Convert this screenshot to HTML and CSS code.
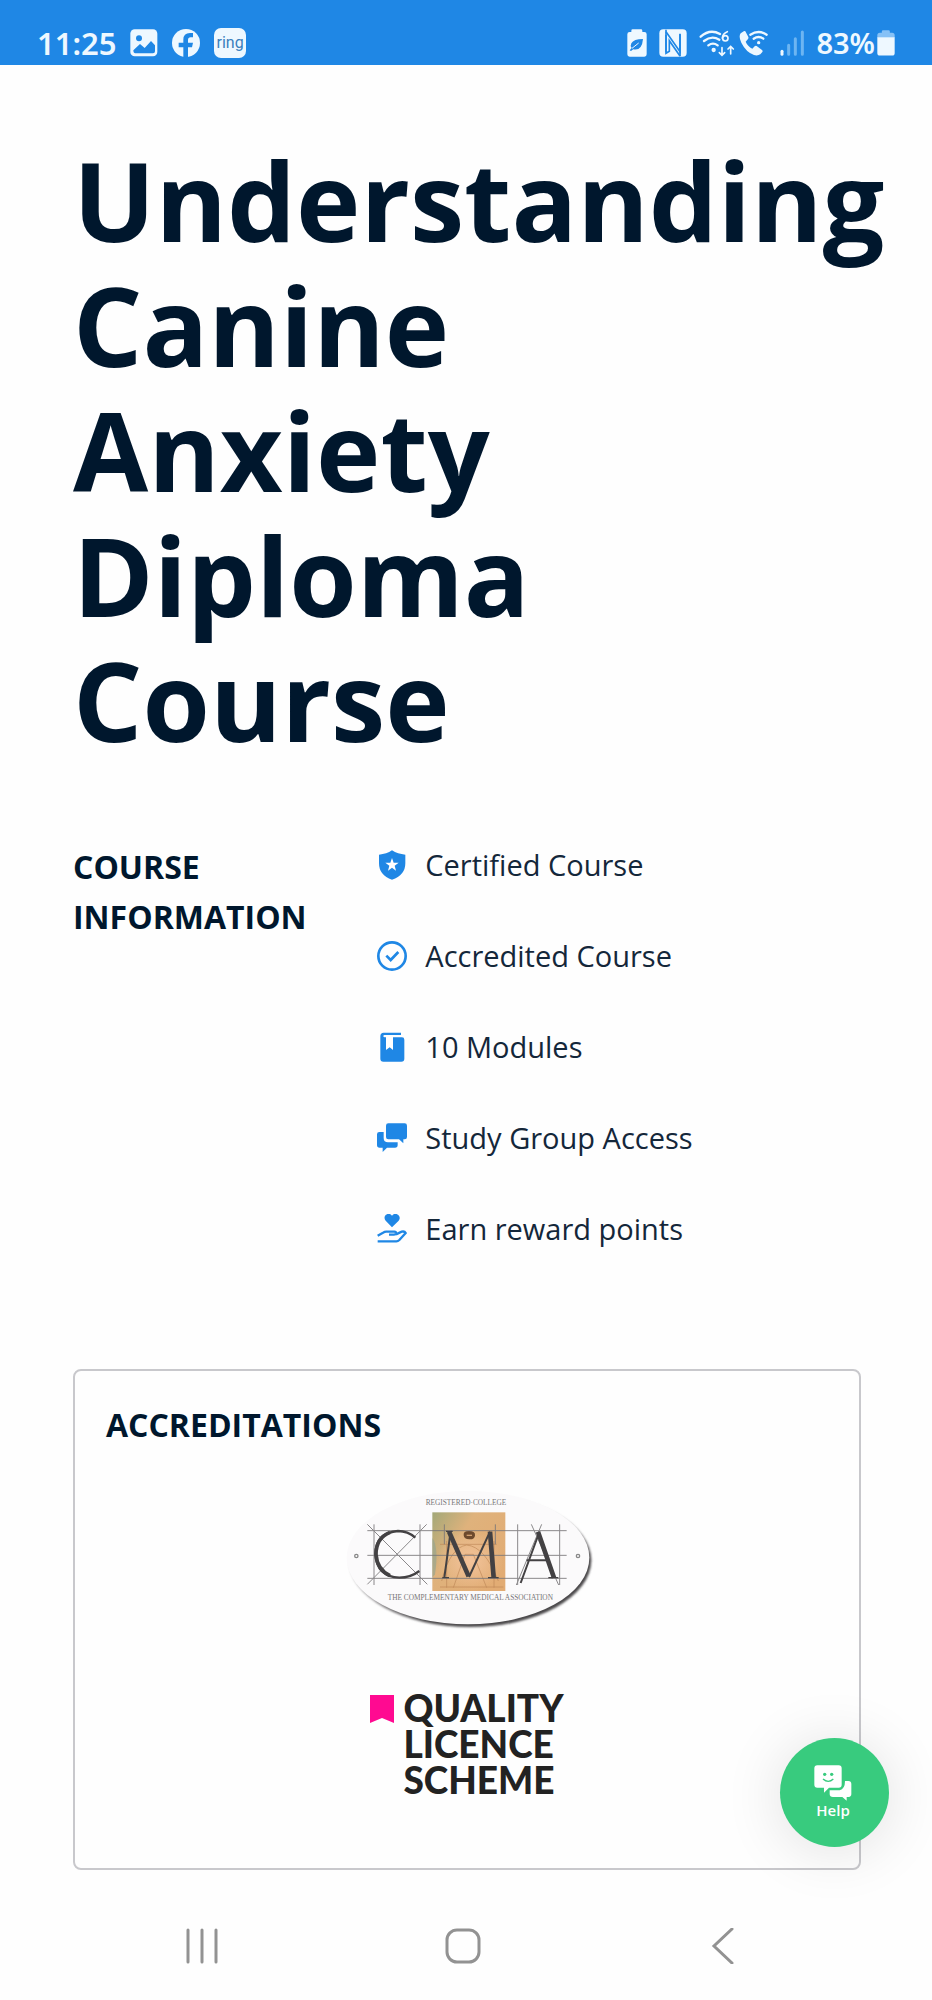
FILE: index.html
```html
<!DOCTYPE html>
<html lang="en">
<head>
<meta charset="utf-8">
<meta name="viewport" content="width=device-width, initial-scale=1">
<title>Understanding Canine Anxiety Diploma Course</title>
<link rel="stylesheet" href="styles.css">
</head>
<body>
<header class="status">
  <div class="status-group">
    <span class="time">11:25</span>
    <svg width="28" height="28" viewBox="392 86 84 84" aria-hidden="true"><rect x="393" y="87" width="81" height="81" rx="13" fill="#eef8ff"/><circle cx="419" cy="114" r="9" fill="#1f87e5"/><path d="M402 150l20-19 14 12 19-21 12 13v18q0 6-6 6h-53q-6 0-6-9z" fill="#1f87e5"/></svg>
    <svg width="28" height="28" viewBox="513 86 84 84" aria-hidden="true"><circle cx="555" cy="128" r="42" fill="#eef8ff"/><path d="M547 171v-30h-14v-14h14v-9q0-20 20-20h9v13h-7q-8 0-8 8v8h15l-3 14h-12v30z" fill="#1f87e5"/></svg>
    <span class="ring">ring</span>
  </div>
  <div class="status-group status-right">
    <svg width="20" height="28" viewBox="78 86 60 84" aria-hidden="true"><path d="M91 95v-4q0-4 4-4h25q4 0 4 4v4h6q7 0 7 7v60q0 7-7 7H86q-7 0-7-7v-60q0-7 7-7z" fill="#eef8ff"/><path d="M126 116q-28 0-35 13-4 7 1 14l-6 7 4 2 7-5q26 5 29-31z" fill="#1f87e5"/><path d="M93 144l20-16" stroke="#eef8ff" stroke-width="3"/></svg>
    <svg width="28" height="28" viewBox="179 86 84 84" aria-hidden="true"><rect x="180" y="87" width="82" height="82" rx="12" fill="#eef8ff"/><path d="M200 88v68M242 168v-68" stroke="#1f87e5" stroke-width="5"/><path d="M200 94l42 60v-52M200 104v55l10-6v-32l32 46" fill="none" stroke="#1f87e5" stroke-width="5"/></svg>
    <div class="radios">
      <svg width="36" height="28" viewBox="299 86 108 84" fill="none" stroke="#eef8ff" stroke-width="7" stroke-linecap="round" aria-hidden="true"><path d="M304 109q28-25 58-8M314 122q23-18 46-4M327 135q14-10 28 0"/><circle cx="343" cy="149" r="3"/><path d="M384 94q-14 6-15 19" stroke-width="5"/><circle cx="378" cy="114" r="8" stroke-width="5"/><path d="M368 142v22M360 157l8 8 8-8M394 161v-22M386 146l8-8 8 8" stroke-width="5"/></svg>
      <svg width="29" height="28" viewBox="420 86 87 84" aria-hidden="true"><path d="M432 94l-7 5q-7 10 2 28 14 28 38 37 11 3 19-2l6-7q2-3-1-6l-16-12q-3-2-6 1l-7 7q-14-7-20-21l7-8q2-3 1-6l-9-17q-3-3-7 1z" fill="#eef8ff"/><path d="M454 103q25-16 49 0M464 115q15-10 29 0" fill="none" stroke="#eef8ff" stroke-width="7" stroke-linecap="round"/><circle cx="479" cy="127" r="5" fill="#eef8ff"/></svg>
    </div>
    <svg width="24" height="28" viewBox="535 86 72 84" stroke-width="9" stroke-linecap="round" aria-hidden="true"><path d="M541 153v9" stroke="#eef8ff"/><path d="M561 135v27M581 115v47M602 95v67" stroke="#6db5f2"/></svg>
    <div class="power">
      <span class="percent">83%</span>
      <svg width="18" height="28" viewBox="830 86 56 84" aria-hidden="true"><path d="M845 96v-4q0-4 4-4h17q4 0 4 4v4h7q8 0 8 8v8h-54v-8q0-8 8-8z" fill="#86c1f6"/><path d="M831 110h54v49q0 8-8 8h-38q-8 0-8-8z" fill="#eef8ff"/></svg>
    </div>
  </div>
</header>

<main class="page">
  <h1 class="title">Understanding Canine Anxiety Diploma Course</h1>

  <section class="info">
    <h2 class="heading">COURSE INFORMATION</h2>
    <ul class="features">
      <li><svg class="icon" viewBox="52 89 90 90" aria-hidden="true"><path d="M97 90q17 11 40 13v26q0 36-40 49-39-13-39-49v-26q23-2 39-13z" fill="#1f87e5"/><path d="M97 113l5 14h15l-12 9 4 15-12-9-12 9 4-15-12-9h15z" fill="#fff"/></svg>Certified Course</li>
      <li><svg class="icon" viewBox="52 361 90 90" fill="none" stroke="#1f87e5" aria-hidden="true"><circle cx="97" cy="406" r="41" stroke-width="8"/><path d="M80 405l13 13 23-24" stroke-width="8"/></svg>Accredited Course</li>
      <li><svg class="icon" viewBox="52 633 90 90" aria-hidden="true"><path d="M72 635h52v7H75q-4 0-4 3 0 4 4 4h52q7 0 7 7v57q0 9-9 9H71q-9 0-9-9v-67q0-11 10-11z" fill="#1f87e5"/><path d="M79 645h21v42l-10-8-11 8z" fill="#fff"/></svg>10 Modules</li>
      <li><svg class="icon" viewBox="52 125 90 90" fill="#1f87e5" aria-hidden="true"><path d="M86 126h49q7 0 7 7v34q0 7-7 7h-4v12l-13-12H86q-7 0-7-7v-34q0-7 7-7z"/><path d="M59 152h13v18q0 13 13 13h29v8q0 8-8 8H82l-13 13v-13H60q-8 0-8-8v-32q0-7 7-7z"/></svg>Study Group Access</li>
      <li><svg class="icon" viewBox="52 398 90 90" aria-hidden="true"><path d="M97 438l-19-20q-7-9 0-17 10-8 19 2 9-10 19-2 8 8 1 17z" fill="#1f87e5"/><path d="M54 463l16-9q5-3 10-3h24q6 0 5 5-1 4-6 4H88M109 459l17-8q9-2 12 4l-19 21q-4 4-9 4H54" fill="none" stroke="#1f87e5" stroke-width="7"/></svg>Earn reward points</li>
    </ul>
  </section>

  <section class="card">
    <h2 class="heading">ACCREDITATIONS</h2>
    <div class="logos">
      <svg class="cma" viewBox="-3 30 768 420" role="img" aria-label="CMA Registered College">
        <defs>
          <linearGradient id="rim" x1="0" y1="0" x2="0.7" y2="1"><stop offset="0.3" stop-color="#f0eff0"/><stop offset="0.6" stop-color="#8b898b"/><stop offset="0.8" stop-color="#4c4a4c"/></linearGradient>
          <linearGradient id="tile" x1="0" y1="0" x2="1" y2="0.7"><stop offset="0" stop-color="#a3a878"/><stop offset="0.4" stop-color="#dfb27c"/><stop offset="1" stop-color="#e2ac74"/></linearGradient>
          <radialGradient id="glow"><stop offset="0" stop-color="#f3c39b"/><stop offset="1" stop-color="#f3c39b" stop-opacity="0"/></radialGradient>
          <filter id="soft" x="-5%" y="-5%" width="110%" height="110%"><feGaussianBlur stdDeviation="3"/></filter>
        </defs>
        <ellipse cx="390" cy="238" rx="364" ry="200" fill="url(#rim)" filter="url(#soft)"/>
        <ellipse cx="384" cy="230" rx="364" ry="200" fill="#fbfafb"/>
        <rect x="277" y="94" width="219" height="236" fill="url(#tile)"/>
        <ellipse cx="390" cy="240" rx="100" ry="90" fill="url(#glow)"/>
        <path d="M277 170q20 30 8 110l-8 10z" fill="#8fa391" opacity="0.6"/>
        <g fill="none" stroke="#c08a5a" stroke-width="3" opacity="0.7"><path d="M300 190h170M305 300q25-100 75-108 55 5 95 108M340 320l35-100 25 0 40 100M300 318h190M320 180v140M462 180v140"/></g>
        <path d="M371 163q-2-13 16-13 20 0 18 14-2 12-17 11-16 0-17-12z" fill="#6d4a2d"/><path d="M380 163h16" stroke="#d2a070" stroke-width="4"/>
        <g stroke="#777577" stroke-width="3" opacity="0.85"><path d="M82 149h598M82 292h598M82 223h598M102 130v182M240 130v182M82 130l180 180M260 130L82 310M533 130v182M659 130v182M574 130l82 182M605 130l-76 182M313 130v60M466 130v60"/></g>
        <g fill="none" stroke="#434143"><path d="M226 170q-23-20-52-20-66 5-68 69 4 68 72 71 34 0 60-20" stroke-width="7"/><path d="M150 154q-42 17-42 66 3 45 42 64" stroke-width="11"/><path d="M313 290l18-132M387 288l63-136M542 306l55-150M560 238h60" stroke-width="6"/><path d="M327 152l59 134M450 152l11 138M594 152l48 138" stroke-width="14"/><path d="M307 290h20M444 290h32M625 290h30M318 151h20" stroke-width="4"/></g>
        <g class="cma-text" text-anchor="middle"><text x="378" y="73">REGISTERED·COLLEGE</text><text x="391" y="357">THE COMPLEMENTARY MEDICAL ASSOCIATION</text></g>
        <g fill="none" stroke="#888" stroke-width="4"><circle cx="49" cy="225" r="5"/><circle cx="714" cy="225" r="5"/></g>
      </svg>
      <div class="qls">
        <svg width="24" height="28" viewBox="0 0 24 28" aria-hidden="true"><path d="M0 0h24v28l-12-5-12 5z" fill="#ff0a91"/></svg>
        <p class="qls-name">QUALITY<br>LICENCE<br>SCHEME</p>
      </div>
    </div>
  </section>
</main>

<button class="help" type="button">
  <svg width="38" height="36" viewBox="223 198 114 108" aria-hidden="true"><path d="M233 199h64q9 0 9 9v49q0 9-9 9h-29l-15 15v-15h-20q-9 0-9-9v-49q0-9 9-9z" fill="#fff"/><g fill="#38cb7e"><circle cx="255" cy="226" r="5"/><circle cx="276" cy="226" r="5"/></g><path d="M250 240q16 14 31 0" fill="none" stroke="#38cb7e" stroke-width="4"/><path d="M316 246h10q9 0 9 9v30q0 8-8 9h-6v11l-13-11h-28q-10 0-10-9v-11h30q16-4 16-28z" fill="#fff"/></svg>
  <span>Help</span>
</button>

<nav class="nav" aria-label="System">
  <button type="button" aria-label="Recent apps"><svg width="36" height="36" viewBox="0 0 36 36"><path d="M4 2v32M18 2v32M32 2v32"/></svg></button>
  <button type="button" aria-label="Home"><svg width="36" height="36" viewBox="0 0 36 36"><rect x="2" y="2" width="32" height="32" rx="10"/></svg></button>
  <button type="button" aria-label="Back"><svg width="36" height="36" viewBox="0 0 36 36"><path d="M26 1L8 18l18 17"/></svg></button>
</nav>
</body>
</html>
```
FILE: styles.css
```css
* {
  box-sizing: border-box;
}

body {
  position: relative;
  display: flex;
  flex-direction: column;
  min-height: 100vh;
  margin: 0;
  background: #fefefe;
  color: #00172d;
  font-family: "Open Sans", "Noto Sans", sans-serif;
}

h1, h2, p, ul {
  margin: 0;
  padding: 0;
}

svg {
  display: block;
  flex: none;
}

.status {
  display: flex;
  justify-content: space-between;
  height: 65px;
  padding: 21px 37px 0;
  background: #1f87e5;
  color: #eef8ff;
}

.status-group {
  display: flex;
  align-items: center;
  gap: 14px;
}

.status-right {
  gap: 12px;
}

.time,
.percent {
  font: 600 30px/40px "Noto Sans", sans-serif;
}

.time {
  font-size: 31px;
}

.percent {
  font-size: 29px;
}

.ring {
  padding: 0 2px;
  border-radius: 7px;
  background: #eef8ff;
  color: #3a7fbd;
  font: 16px/30px Roboto, sans-serif;
}

.radios {
  display: flex;
  gap: 4px;
}

.power {
  display: flex;
  align-items: center;
  gap: 2px;
}

.page {
  flex: 1;
  padding: 72px 71px 20px 73px;
}

.title {
  font-size: 109px;
  font-weight: 700;
  line-height: 125px;
}

.info {
  display: grid;
  grid-template-columns: 5fr 8fr;
  column-gap: 2px;
  padding: 80px 0 120px;
}

.heading {
  font-size: 32px;
  font-weight: 700;
  line-height: 50px;
}

.features {
  display: flex;
  flex-direction: column;
  gap: 51px;
  padding-top: 3px;
  list-style: none;
}

.features li {
  display: flex;
  align-items: center;
  gap: 18px;
  color: #14273a;
  font-size: 29px;
  line-height: 40px;
}

.icon {
  width: 30px;
  height: 30px;
}

.card {
  padding: 29px 31px 70px;
  border: 2px solid #c8c8cc;
  border-radius: 8px;
}

.logos {
  display: flex;
  flex-direction: column;
  align-items: center;
  gap: 59px;
  padding-top: 41px;
}

.cma {
  width: 256px;
  height: 140px;
}

.cma-text {
  fill: #777577;
  font: 22px "Liberation Serif", serif;
}

.qls {
  display: flex;
  gap: 9px;
}

.qls svg {
  margin-top: 5px;
}

.qls-name {
  color: #222;
  font: 900 37px/36px Lato, sans-serif;
}

.help {
  position: absolute;
  right: 43px;
  bottom: 153px;
  display: flex;
  flex-direction: column;
  align-items: center;
  width: 109px;
  height: 109px;
  padding: 27px 3px 0 0;
  border: 0;
  border-radius: 50%;
  background: #38cb7e;
  box-shadow: 0 4px 60px rgba(0, 0, 0, 0.12);
  color: #fff;
  font: 600 15px/18px "Open Sans", sans-serif;
}

.nav {
  display: flex;
  align-items: center;
  justify-content: space-between;
  height: 109px;
  padding: 0 190px 0 184px;
}

.nav button {
  padding: 0;
  border: 0;
  background: none;
}

.nav svg {
  fill: none;
  stroke: #929292;
  stroke-width: 3;
  stroke-linecap: round;
}
```
